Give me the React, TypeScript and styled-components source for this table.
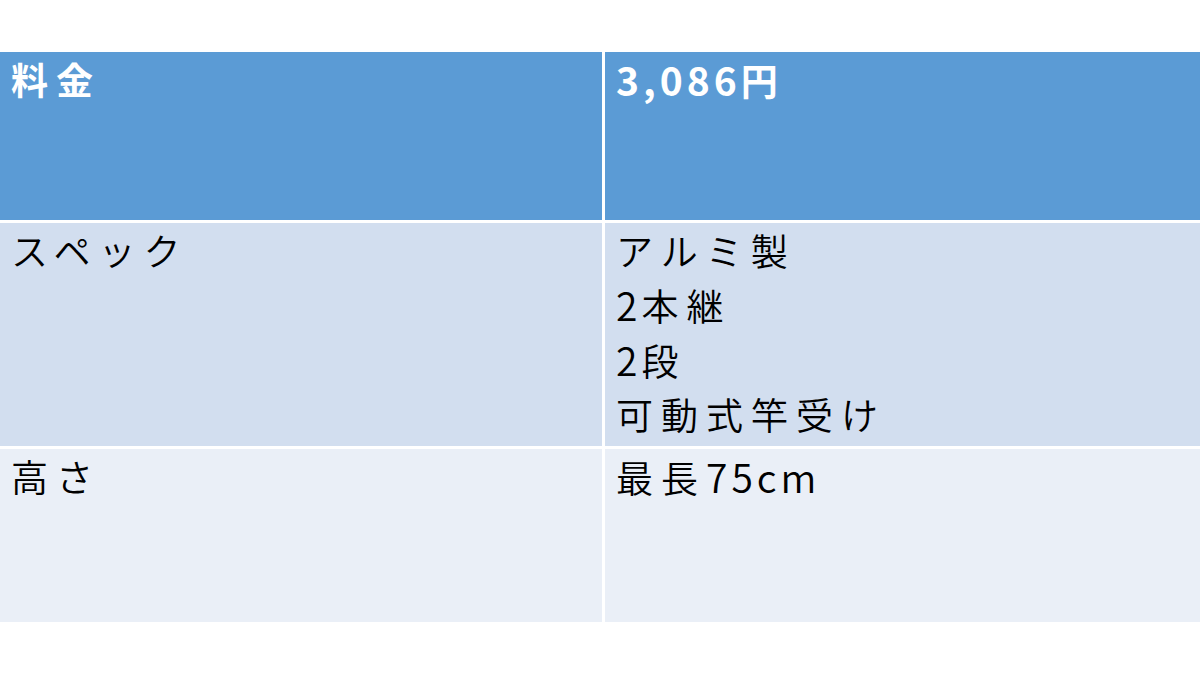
import React from "react";
import styled, { createGlobalStyle } from "styled-components";

const Global = createGlobalStyle`
  html, body { margin: 0; padding: 0; background: #ffffff; }
  body { width: 1200px; height: 675px; overflow: hidden; font-family: "Noto Sans CJK JP", "Noto Sans", sans-serif; }
`;

const Page = styled.div`
  width: 1200px;
  height: 675px;
  padding-top: 52px;
  box-sizing: border-box;
  background: #ffffff;
`;

const Table = styled.div`
  display: grid;
  grid-template-columns: 602px 595px;
  grid-template-rows: 168px 223px 173px;
  column-gap: 3px;
  row-gap: 3px;
  background: #ffffff;
  width: 1200px;
`;

type Variant = "head" | "odd" | "even";

const Cell = styled.div<{ $variant: Variant }>`
  background: ${(p) =>
    p.$variant === "head" ? "#5b9bd5" : p.$variant === "odd" ? "#d2deef" : "#eaeff7"};
  color: ${(p) => (p.$variant === "head" ? "#ffffff" : "#000000")};
  font-weight: ${(p) => (p.$variant === "head" ? 700 : 350)};
  font-size: 37px;
  line-height: 54px;
  letter-spacing: 8px;
  padding: 0 11px;
  box-sizing: border-box;
`;

const Line = styled.div`
  white-space: nowrap;
`;

const Latin = styled.span`
  font-size: 39px;
  letter-spacing: 4px;
`;

const renderText = (s: string) =>
  s.split(/([0-9,a-z]+)/).map((part, i) =>
    /^[0-9,a-z]+$/.test(part) ? <Latin key={i}>{part}</Latin> : <React.Fragment key={i}>{part}</React.Fragment>
  );

const rows: { variant: Variant; left: string[]; right: string[] }[] = [
  { variant: "head", left: ["料金"], right: ["3,086円"] },
  { variant: "odd", left: ["スペック"], right: ["アルミ製", "2本継", "2段", "可動式竿受け"] },
  { variant: "even", left: ["高さ"], right: ["最長75cm"] },
];

export default function App() {
  return (
    <>
      <Global />
      <Page>
        <Table>
          {rows.map((r) => (
            <React.Fragment key={r.left[0]}>
              <Cell $variant={r.variant}>
                {r.left.map((l) => (
                  <Line key={l}>{renderText(l)}</Line>
                ))}
              </Cell>
              <Cell $variant={r.variant}>
                {r.right.map((l) => (
                  <Line key={l}>{renderText(l)}</Line>
                ))}
              </Cell>
            </React.Fragment>
          ))}
        </Table>
      </Page>
    </>
  );
}
